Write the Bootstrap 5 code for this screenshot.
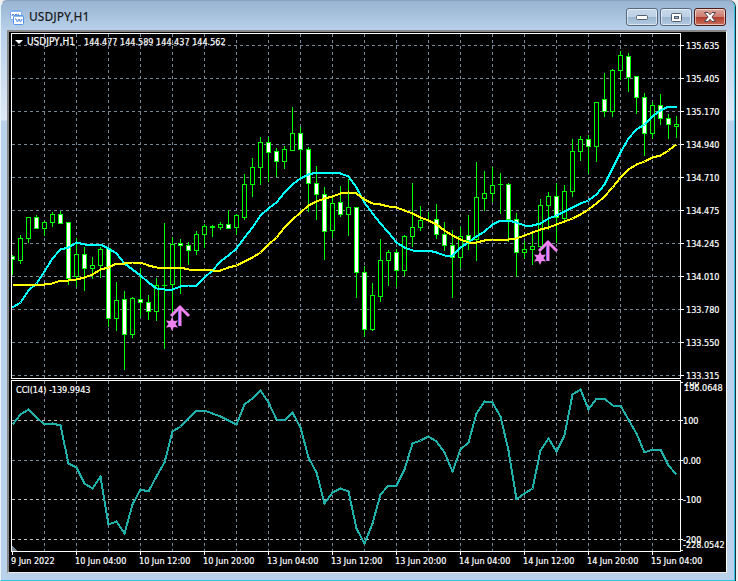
<!DOCTYPE html>
<html lang="en">
<head>
<meta charset="utf-8">
<meta name="viewport" content="width=device-width, initial-scale=1">
<title>USDJPY,H1</title>
<link href="https://cdn.jsdelivr.net/npm/bootstrap@5.3.0/dist/css/bootstrap.min.css" rel="stylesheet">
<style>
body{background:#f0f0f0;font-family:"Noto Sans","Open Sans",sans-serif}
.chart-window{background:linear-gradient(#98b4d2,#b9d1ea 30px,#dfe9f5 119px,#b9d1ea 120px);border:1px solid #2fc5e4;border-top-color:#8aa3bd;border-left-color:#e8f4fb;border-radius:7px 7px 0 0;padding:0 7px 7px 6px;box-shadow:1px 0 0 #20303a;margin-right:3px}
.title-bar{height:29px;padding:3px 1px 0 3px}
.title-text{font-size:12px;line-height:18px;color:#1c1c1c}
.win-btn{width:32px;height:18px;border:1px solid #56697f;border-radius:3px;background:linear-gradient(#c6d8ea,#bdd0e4 48%,#9db6d0 52%,#b4cae2);box-shadow:inset 0 0 0 1px rgba(255,255,255,.55)}
.win-btn.win-close{border-color:#4d1a16;background:linear-gradient(#dba59c,#cd7d71 48%,#b23c2c 52%,#c8705c)}
.win-controls{gap:2px}
.client{background:#000;border:solid #888;border-width:2px 1px 1px 2px;border-right-color:#fff;border-bottom-color:#f4e8e8}
.client svg{width:100%;height:auto}
.plot-text{font-family:"DejaVu Sans Condensed","DejaVu Sans",sans-serif;font-size:9px;fill:#fff;stroke:#fff;stroke-width:.2px}
.plot-text.symbol{font-size:10px}
</style>
<script src="https://cdn.jsdelivr.net/npm/bootstrap@5.3.0/dist/js/bootstrap.bundle.min.js"></script>
</head>
<body>
<main class="chart-window">
  <header class="title-bar d-flex align-items-center">
    <svg class="me-1" width="15" height="15" viewBox="0 0 15 15" aria-hidden="true">
      <rect x=".5" y=".5" width="11" height="9" rx="1" fill="#fff" stroke="#79aaf2"/><path d="M1 1.500h10" stroke="#8db8f4"/><path d="M2 6l1-2 1.500 2L6 4l1.500 1L9 4" fill="none" stroke="#4b83dc"/>
      <rect x="3.500" y="5.500" width="10" height="9" rx="1" fill="#fff" stroke="#5b94f0"/><path d="M4 6.500h9" stroke="#8db8f4"/><path d="M5 9h1l1.500 3L9 9l1.500 3L12 9" fill="none" stroke="#4b83dc"/>
    </svg>
    <h1 class="title-text m-0 me-auto">USDJPY,H1</h1>
    <div class="win-controls d-flex" role="group" aria-label="Window controls">
      <button type="button" class="win-btn p-0 d-flex align-items-center justify-content-center" aria-label="Minimize"><svg width="12" height="6"><rect x=".5" y="1.500" width="11" height="4" rx="1" fill="#fff" stroke="#54606e"/></svg></button>
      <button type="button" class="win-btn p-0 d-flex align-items-center justify-content-center" aria-label="Maximize"><svg width="11" height="9"><rect x=".5" y=".5" width="10" height="8" rx="1" fill="#fff" stroke="#54606e"/><rect x="3.500" y="3.500" width="4" height="2" fill="#9db6d0" stroke="#54606e"/></svg></button>
      <button type="button" class="win-btn win-close p-0 d-flex align-items-center justify-content-center" aria-label="Close"><svg width="12" height="10"><path d="M.5.5h3.500l2 2.200 2-2.200h3.500L8 5l3.500 4.500H8L6 7.300 4 9.500H.5L4 5z" fill="#fff" stroke="#54464c"/></svg></button>
    </div>
  </header>
  <section class="client">
    <svg id="plot" class="d-block" viewBox="9 32 717 540" role="img" aria-label="USDJPY hourly candles with moving averages and CCI"></svg>
  </section>
</main>
<script>
// Each candle: high, low, body top, body bottom, kind (1 falling, 0 rising)
const candles = [
[255,275,256,260,1],[235,264,238,261,0],[217,243,217,239,0],[215,229,217,229,1],[221,236,222,229,0],[212,227,214,223,0],[211,224,214,224,1],[222,285,222,279,1],[238,287,254,277,0],[247,291,254,269,1],
[257,279,265,269,0],[247,278,249,266,0],[248,327,248,319,1],[282,331,300,319,0],[291,370,299,335,1],[297,338,298,335,0],[268,317,299,303,1],[295,320,302,312,1],[278,321,285,312,0],[223,349,285,286,0],
[237,314,244,285,0],[239,294,243,246,1],[242,265,245,251,1],[231,255,234,251,0],[224,248,226,235,0],[225,237,226,228,0],[222,230,224,228,0],[210,229,224,229,1],[214,235,215,228,0],[174,220,184,218,0],
[158,197,167,185,0],[137,185,142,168,0],[137,182,142,153,1],[148,177,151,162,1],[146,169,149,162,0],[107,151,133,151,0],[127,178,133,150,1],[147,212,149,184,1],[166,220,183,195,1],[187,260,194,232,1],
[197,238,203,231,0],[186,217,202,215,1],[179,236,207,215,0],[207,298,207,273,1],[266,337,272,330,1],[283,331,295,330,0],[239,302,260,297,0],[250,286,252,261,0],[249,287,252,271,1],[235,276,236,271,0],
[183,247,227,237,0],[206,231,220,228,0],[212,222,220,221,0],[204,239,219,235,1],[222,251,234,246,1],[230,298,245,258,1],[227,268,236,258,0],[215,250,235,241,1],[162,261,197,240,0],[171,211,193,199,0],
[167,202,185,194,0],[173,214,184,185,0],[183,242,184,220,1],[213,277,219,253,1],[241,259,249,253,0],[233,265,246,250,0],[199,249,205,247,0],[192,230,196,206,0],[183,243,196,218,1],[185,221,191,219,0],
[139,197,151,192,0],[136,161,139,152,0],[135,174,139,147,1],[102,162,102,147,0],[73,117,99,112,1],[69,117,70,112,0],[51,80,55,71,0],[53,92,56,78,1],[76,114,76,98,1],[93,156,97,134,1],
[102,139,105,134,0],[94,125,105,119,1],[114,139,118,125,1],[116,138,124,127,0]];
const fast = [307,302,290,283,271,258,249,247,242,244,244,244,248,253,263,269,275,282,288,289,289,286,285,285,277,270,261,255,248,237,227,215,208,202,192,184,178,174,172,172,172,173,176,187,202,213,223,232,242,247,250,250,250,252,255,255,247,242,236,231,224,220,220,222,225,225,223,218,215,211,207,203,200,194,184,168,152,138,129,124,116,110,106,106];
const slow = [284,284,284,284,284,283,280,280,279,277,274,269,267,263,263,262,262,265,267,267,267,267,269,269,269,270,270,267,265,261,257,252,244,237,227,219,212,205,201,198,196,193,192,193,199,203,204,206,207,210,213,217,220,224,230,235,239,242,242,240,239,239,239,238,235,232,229,227,224,221,218,214,209,203,196,187,177,169,164,161,157,155,150,144];
const cci = [424,414,409,417,424,423,425,463,467,483,488,476,524,521,533,504,489,491,476,462,431,426,418,410,410,413,416,420,424,404,398,390,402,419,420,412,427,457,472,503,492,488,491,528,543,523,494,485,485,469,443,440,436,441,452,471,449,442,413,401,402,416,450,499,493,488,450,438,451,435,394,389,409,398,398,405,405,419,433,452,449,449,465,474];
const prices = ["135.635","135.405","135.170","134.940","134.710","134.475","134.245","134.010","133.780","133.550","133.315"];
const dates = ["9 Jun 2022","10 Jun 04:00","10 Jun 12:00","10 Jun 20:00","13 Jun 04:00","13 Jun 12:00","13 Jun 20:00","14 Jun 04:00","14 Jun 12:00","14 Jun 20:00","15 Jun 04:00"];
const px = i => 12 + 8 * i;
const line = (d, color, w, extra = "") => `<path d="${d}" fill="none" stroke="${color}" stroke-width="${w}" ${extra}/>`;
const text = (x, y, s, cls = "") => `<text class="plot-text ${cls}" x="${x}" y="${y}">${s}</text>`;
const series = (v, color) => line("M" + v.map((y, i) => `${px(i) + .5} ${y + .5}`).join("L"), color, 2, 'stroke-linejoin="round"');
let out = '<g shape-rendering="crispEdges">';
for (let x = 44; x < 680; x += 32)
  out += line(`M${x + .5} 34V378M${x + .5} 381V551`, "#778899", 1, 'stroke-dasharray="3 3"');
for (let y = 45; y < 378; y += 33) out += line(`M12 ${y + .5}H680`, "#778899", 1, 'stroke-dasharray="3 3"');
[[420, "#c0c0c0"], [460, "#778899"], [499, "#c0c0c0"], [539, "#c0c0c0"]].forEach(([y, c]) => out += line(`M12 ${y + .5}H680`, c, 1, 'stroke-dasharray="3 3"'));
out += '<path d="M12 546v5h5z" fill="#778899"/>';
candles.forEach(([h, l, t, b, down], i) => {
  const x = px(i), left = Math.max(x - 2, 12), w = x + 3 - left;
  out += `<rect x="${x}" y="${h}" width="1" height="${l - h}" fill="#0f0"/><rect x="${left}" y="${t}" width="${w}" height="${b - t}" fill="#0f0"/>`;
  if (b - t > 2) out += `<rect x="${Math.max(x - 1, 12)}" y="${t + 1}" width="${Math.min(3, w - 1)}" height="${b - t - 2}" fill="${down ? "#fff" : "#000"}"/>`;
});
out += line("M11.500 378.500V33.500H680.500V378.500ZM11.500 551.500V380.500H680.500V551.500Z", "#fff", 1);
for (let y = 45; y < 378; y += 33) out += line(`M681 ${y + .5}h3`, "#fff", 1);
[382, 420, 460, 499, 539, 550].forEach(y => out += line(`M681 ${y + .5}h2`, "#fff", 1));
dates.forEach((_, i) => out += line(`M${12.5 + 64 * i} 552v3`, "#fff", 1));
out += series(fast, "#0ff") + series(slow, "#ff0") + series(cci, "#20b2aa");
out += "</g>";
// Buy signals: an arrow whose stem has a darker left side, and a six-pointed star
[[180, 305, 172, 324], [548, 240, 540, 258]].forEach(([x, y, sx, sy]) => {
  out += line(`M${x} ${y + 1}V${y + 21}M${x - 9} ${y + 11}L${x} ${y + 2}L${x + 9} ${y + 11}`, "#ee82ee", 3);
  out += line(`M${x - 1.5} ${y + 5}V${y + 21}`, "#7d6cf0", 1);
  let s = "";
  for (let k = 0; k < 12; k++) { const r = k % 2 ? 3.5 : 7, a = Math.PI * k / 6; s += (k ? "L" : "M") + (sx + r * Math.sin(a)).toFixed(1) + " " + (sy - r * Math.cos(a)).toFixed(1); }
  out += `<path d="${s}Z" fill="#ee82ee"/>`;
});
out += '<path d="M15 40h8l-4 4z" fill="#fff"/>';
out += text(27, 45, "USDJPY,H1", "symbol") + text(84, 45, "144.477 144.589 144.437 144.562") + text(16, 393, "CCI(14) -139.9943");
prices.forEach((p, i) => out += text(686, 49 + 33 * i, p));
out += '<clipPath id="sub"><rect x="681" y="382" width="46" height="180"/></clipPath><g clip-path="url(#sub)">' + text(684, 386, "200") + "</g>";
out += text(684, 391, "196.0648") + text(683, 424, "100") + text(683, 464, "0.00") + text(683, 503, "-100") + text(683, 543, "-200") + text(683, 548, "-228.0542");
dates.forEach((d, i) => out += text(11 + 64 * i, 564, d));
document.getElementById("plot").innerHTML = out;
</script>
</body>
</html>
